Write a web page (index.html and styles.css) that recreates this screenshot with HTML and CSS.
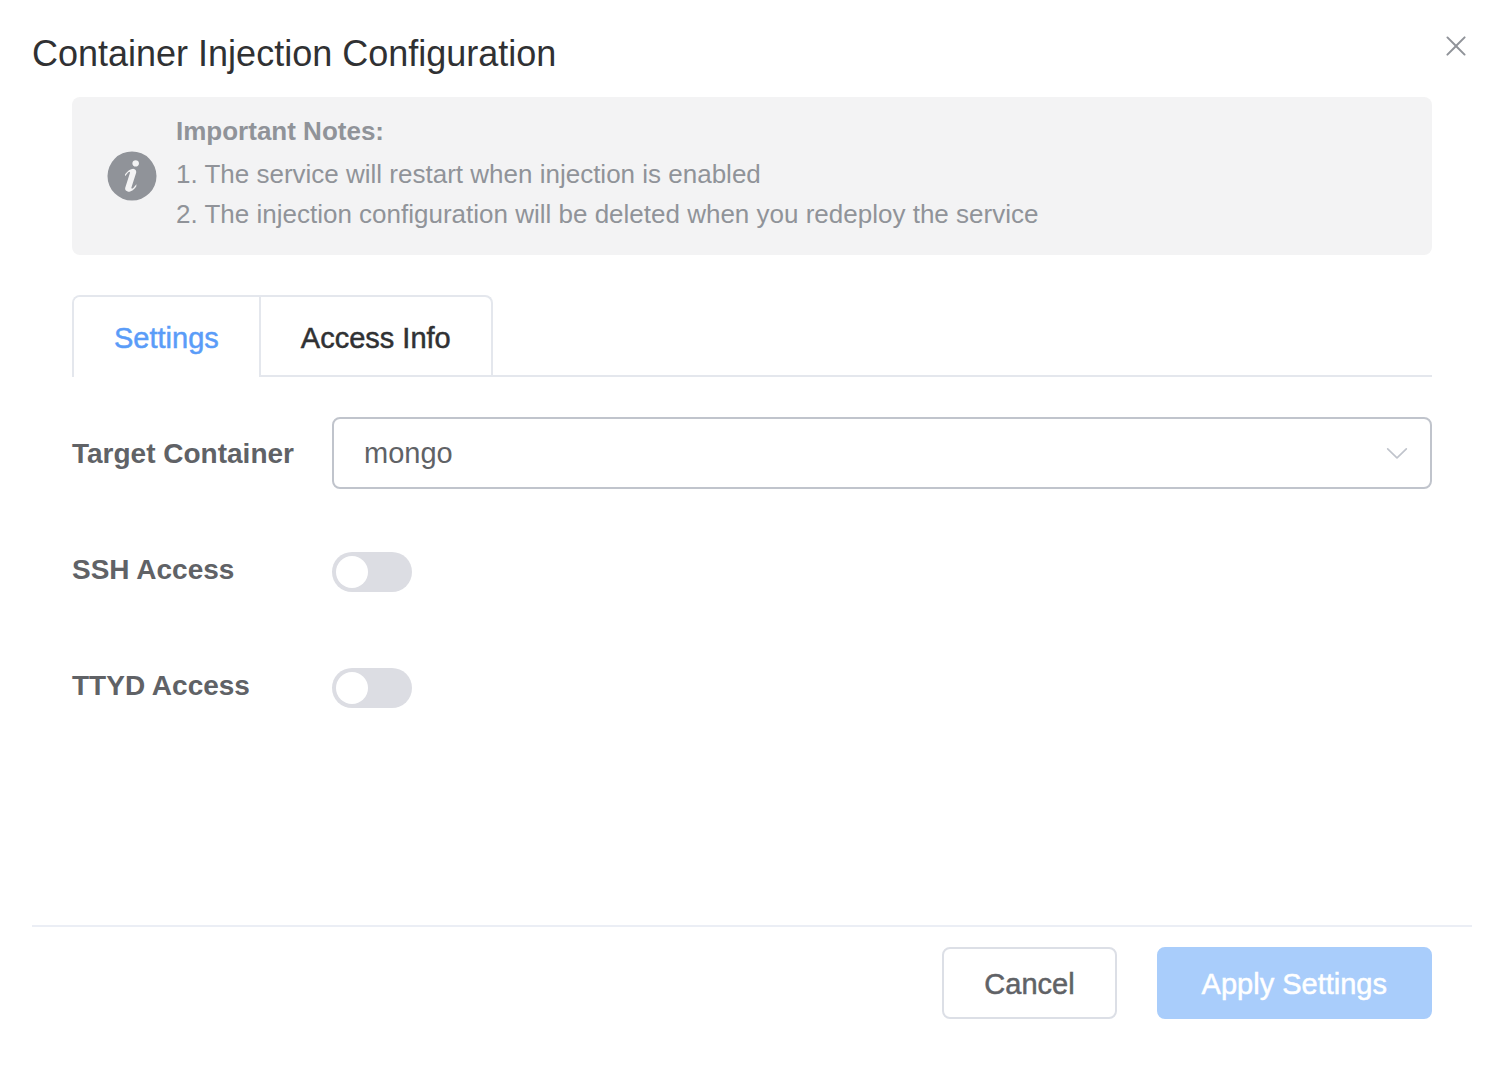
FILE: index.html
```html
<!DOCTYPE html>
<html lang="en">
<head>
<meta charset="utf-8">
<meta name="viewport" content="width=device-width, initial-scale=1">
<title>Container Injection Configuration</title>
<link rel="stylesheet" href="styles.css">
</head>
<body>
<div class="dialog" role="dialog" aria-labelledby="dialog-title">
  <header class="dialog-header">
    <h1 class="dialog-title" id="dialog-title">Container Injection Configuration</h1>
    <button class="close-button" type="button" aria-label="Close">
      <svg width="32" height="32" viewBox="0 0 1024 1024" fill="currentColor" aria-hidden="true"><path d="M764.288 214.592 512 466.88 259.712 214.592a31.936 31.936 0 0 0-45.12 45.12L466.752 512 214.528 764.224a31.936 31.936 0 1 0 45.12 45.184L512 557.184l252.288 252.288a31.936 31.936 0 0 0 45.12-45.12L557.12 512.064l252.288-252.352a31.936 31.936 0 1 0-45.12-45.184z"/></svg>
    </button>
  </header>

  <main class="dialog-body">
    <section class="alert">
      <svg class="alert-icon" width="56" height="56" viewBox="0 0 1024 1024" fill="currentColor" aria-hidden="true"><path d="M512 64a448 448 0 1 1 0 896.064A448 448 0 0 1 512 64m67.2 275.072c33.28 0 60.288-23.104 60.288-57.344s-27.072-57.344-60.288-57.344c-33.28 0-60.16 23.104-60.16 57.344s26.88 57.344 60.16 57.344M590.912 699.2c0-6.848 2.368-24.64 1.024-34.752l-52.608 60.544c-10.88 11.456-24.512 19.392-30.912 17.28a12.992 12.992 0 0 1-8.256-14.72l87.68-276.992c7.168-35.136-12.544-67.2-54.336-71.296-44.096 0-108.992 44.736-148.48 101.504 0 6.784-1.28 23.68.064 33.792l52.544-60.608c10.88-11.328 23.552-19.328 29.952-17.152a12.8 12.8 0 0 1 7.808 16.128L388.48 728.576c-10.048 32.256 8.96 63.872 55.04 71.04 67.84 0 107.904-43.648 147.456-100.416z"/></svg>
      <div class="alert-content">
        <h2 class="alert-title">Important Notes:</h2>
        <p class="alert-line">1. The service will restart when injection is enabled</p>
        <p class="alert-line">2. The injection configuration will be deleted when you redeploy the service</p>
      </div>
    </section>

    <div class="tab-bar">
      <div class="tab-list" role="tablist">
        <button class="tab tab-active" type="button" role="tab" aria-selected="true">Settings</button>
        <button class="tab" type="button" role="tab" aria-selected="false">Access Info</button>
      </div>
    </div>

    <form class="settings-form">
      <div class="form-row">
        <label class="form-label" for="target-container">Target Container</label>
        <div class="select-box">
          <select class="select" id="target-container">
            <option>mongo</option>
          </select>
          <svg class="select-arrow" width="28" height="28" viewBox="0 0 1024 1024" fill="currentColor" aria-hidden="true"><path d="M831.872 340.864 512 652.672 192.128 340.864a30.592 30.592 0 0 0-42.752 0 29.12 29.12 0 0 0 0 41.6L489.664 714.24a32 32 0 0 0 44.672 0l340.288-331.712a29.12 29.12 0 0 0 0-41.728 30.592 30.592 0 0 0-42.752 0z"/></svg>
        </div>
      </div>
      <div class="form-row">
        <label class="form-label" for="ssh-access">SSH Access</label>
        <input class="switch" type="checkbox" role="switch" id="ssh-access">
      </div>
      <div class="form-row">
        <label class="form-label" for="ttyd-access">TTYD Access</label>
        <input class="switch" type="checkbox" role="switch" id="ttyd-access">
      </div>
    </form>
  </main>

  <footer class="dialog-footer">
    <button class="button" type="button">Cancel</button>
    <button class="button button-primary" type="button" disabled>Apply Settings</button>
  </footer>
</div>
</body>
</html>
```
FILE: styles.css
```css
* {
  box-sizing: border-box;
}

body {
  margin: 0;
  background: #fff;
  color: #606266;
  font-family: "Helvetica Neue", Helvetica, "Liberation Sans", Arial, sans-serif;
  font-size: 28px;
}

button,
select {
  font: inherit;
}

.dialog {
  display: flex;
  flex-direction: column;
  min-height: 100vh;
  padding: 28px 24px 49px 32px;
}

.dialog-header {
  display: flex;
  justify-content: space-between;
  align-items: flex-start;
  margin-bottom: 17px;
}

.dialog-title {
  margin: 0;
  color: #303133;
  font-size: 36px;
  font-weight: 400;
  line-height: 52px;
}

.close-button {
  display: flex;
  padding: 2px 0;
  border: 0;
  background: none;
  color: #909399;
}

.dialog-body {
  flex: 1;
  padding: 0 40px;
}

.alert {
  display: flex;
  align-items: center;
  gap: 16px;
  padding: 16px 32px;
  border-radius: 8px;
  background: #f3f3f4;
  color: #909399;
}

.alert-icon {
  flex: none;
}

.alert-content {
  padding-bottom: 5px;
}

.alert-title {
  margin: 0 0 5px;
  font-size: 26px;
  line-height: 36px;
}

.alert-line {
  margin: 0;
  font-size: 26px;
  line-height: 40px;
}

.tab-bar {
  display: flex;
  margin-top: 40px;
  border-bottom: 2px solid #e4e7ed;
}

.tab-list {
  display: flex;
  border: 2px solid #e4e7ed;
  border-bottom: 0;
  border-radius: 8px 8px 0 0;
}

.tab {
  height: 78px;
  padding: 4px 40px 0;
  border: 0;
  background: none;
  color: #303133;
  font-size: 29px;
  -webkit-text-stroke: 0.5px currentColor;
}

.tab + .tab {
  border-left: 2px solid #e4e7ed;
}

.tab-active {
  height: 80px;
  margin-bottom: -2px;
  padding-bottom: 2px;
  border-radius: 6px 0 0 0;
  background: #fff;
  color: #5a9cf8;
}

.settings-form {
  display: grid;
  gap: 44px;
  padding: 40px 0;
}

.form-row {
  display: flex;
  align-items: center;
  min-height: 72px;
}

.form-label {
  flex: none;
  width: 260px;
  padding-top: 2px;
  font-weight: 700;
}

.select-box {
  position: relative;
  flex: 1;
}

.select {
  display: block;
  width: 100%;
  height: 72px;
  padding: 0 64px 0 30px;
  border: 2px solid #c0c4cc;
  border-radius: 8px;
  appearance: none;
  background: #fff;
  color: #606266;
  font-size: 29px;
}

.select-arrow {
  position: absolute;
  top: 22px;
  right: 21px;
  color: #c0c4cc;
  pointer-events: none;
}

.switch {
  display: flex;
  align-items: center;
  width: 80px;
  height: 40px;
  margin: 6px 0 0;
  padding: 4px;
  border-radius: 20px;
  appearance: none;
  background: #dcdde3;
}

.switch::before {
  content: "";
  width: 32px;
  height: 32px;
  border-radius: 50%;
  background: #fff;
}

.switch:checked {
  justify-content: flex-end;
  background: #5a9cf8;
}

.dialog-footer {
  display: flex;
  justify-content: flex-end;
  gap: 40px;
  padding: 20px 40px 0;
  border-top: 2px solid #ebeef5;
}

.button {
  height: 72px;
  padding: 2px 40px 0;
  border: 2px solid #dcdfe6;
  border-radius: 8px;
  background: #fff;
  color: #606266;
  font-size: 29px;
  -webkit-text-stroke: 0.5px currentColor;
}

.button-primary {
  padding: 2px 43px 0;
  border-color: #a9cdfb;
  background: #a9cdfb;
  color: #fff;
}
```
